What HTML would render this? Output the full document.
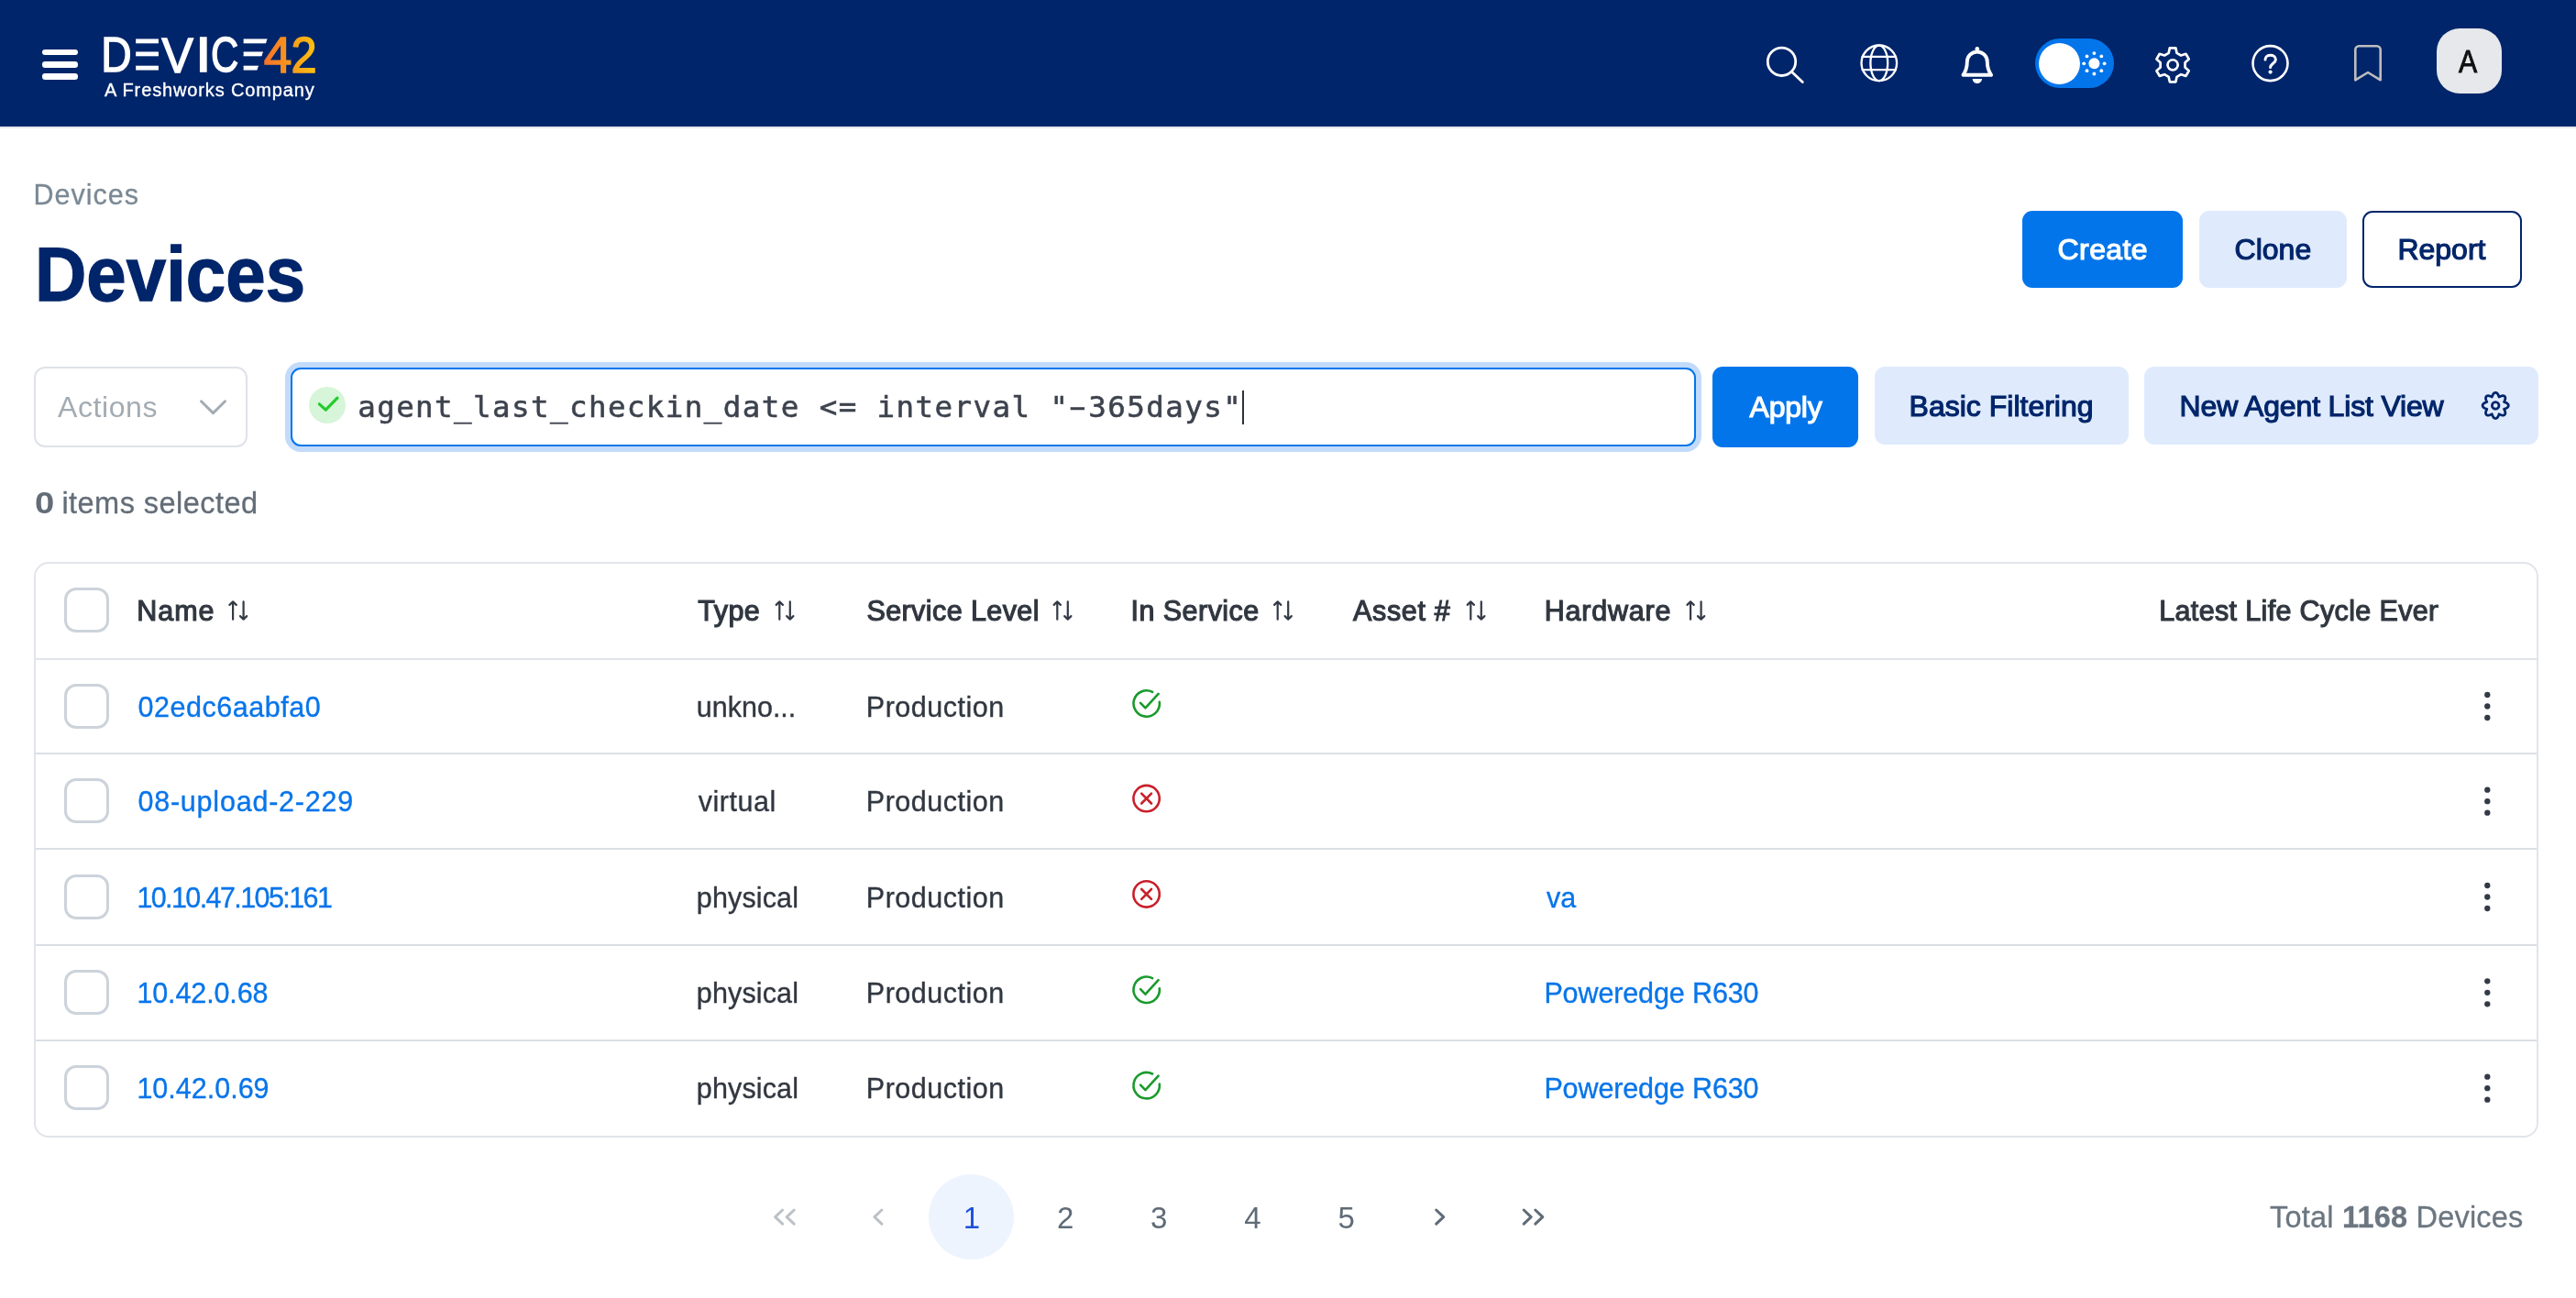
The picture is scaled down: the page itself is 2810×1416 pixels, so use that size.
<!DOCTYPE html>
<html lang="en"><head><meta charset="utf-8"><title>Devices</title>
<style>
html,body{margin:0;padding:0}
body{width:2810px;height:1416px;overflow:hidden;background:#fff;position:relative;font-family:"Liberation Sans",sans-serif}
.t{position:absolute;white-space:nowrap;line-height:1}
.t b{font-weight:700}
.a{position:absolute;box-sizing:border-box}
.cb{position:absolute;box-sizing:border-box;left:70.1px;width:49px;height:49px;border:3.75px solid #cdd3db;border-radius:13px;background:#fff}
.ln{position:absolute;left:39px;width:2728px;height:2.3px;background:#e1e4ea}
svg{position:absolute;left:0;top:0;overflow:visible}
svg text{font-family:"Liberation Sans",sans-serif}
#page{position:absolute;left:0;top:0;width:2810px;height:1416px;will-change:transform}

</style></head>
<body>
<div id="page">
<div class="a" style="left:0;top:0;width:2810px;height:138px;background:#00256a"></div>
<div class="a" style="left:0;top:138px;width:2810px;height:2px;background:#e3e6ee"></div>
<div class="a" style="left:46px;top:53.8px;width:39px;height:6.6px;border-radius:3.3px;background:#fff"></div>
<div class="a" style="left:46px;top:67.1px;width:39px;height:6.6px;border-radius:3.3px;background:#fff"></div>
<div class="a" style="left:46px;top:80.4px;width:39px;height:6.6px;border-radius:3.3px;background:#fff"></div>
<div class="a" style="left:2220px;top:42px;width:86px;height:54px;border-radius:27px;background:#0375eb"></div>
<div class="a" style="left:2224px;top:46.5px;width:45px;height:45px;border-radius:50%;background:#fff"></div>
<div class="a" style="left:2658px;top:31px;width:71px;height:71px;border-radius:25px;background:#e6e8ec"></div>
<div class="a" style="left:2206px;top:230px;width:175px;height:83.5px;border-radius:11px;background:#0375eb"></div>
<div class="a" style="left:2399px;top:230px;width:161px;height:83.5px;border-radius:11px;background:#dfebfd"></div>
<div class="a" style="left:2577px;top:230px;width:174px;height:83.5px;border-radius:11px;border:2.5px solid #00256a;background:#fff"></div>
<div class="a" style="left:37.4px;top:400px;width:233px;height:87.5px;border-radius:12px;border:2.2px solid #dfe2e8;background:#fff"></div>
<div class="a" style="left:317px;top:400.5px;width:1532.5px;height:86.5px;border-radius:11px;border:2.5px solid #0375eb;background:#fff;box-shadow:0 0 0 6px #c2dbfb"></div>
<div class="a" style="left:337.1px;top:421.9px;width:40px;height:40px;border-radius:50%;background:#d7f5d9"></div>
<div class="a" style="left:1354.9px;top:426px;width:2.1px;height:37px;background:#2b323b"></div>
<div class="a" style="left:1868px;top:400px;width:159px;height:88px;border-radius:11px;background:#0375eb"></div>
<div class="a" style="left:2045px;top:400px;width:276.7px;height:85px;border-radius:11px;background:#dfebfd"></div>
<div class="a" style="left:2339px;top:400px;width:430px;height:85px;border-radius:11px;background:#dfebfd"></div>
<div class="a" style="left:37px;top:613px;width:2732px;height:627.6px;border-radius:16px;border:2.2px solid #e1e4ea;border-bottom-width:2.8px;background:#fff"></div>
<div class="ln" style="top:717.9px"></div>
<div class="ln" style="top:820.9px;background:#dbdfe5"></div>
<div class="ln" style="top:925.2px;background:#dbdfe5"></div>
<div class="ln" style="top:1029.6px;background:#dbdfe5"></div>
<div class="ln" style="top:1133.9px;background:#dbdfe5"></div>
<div class="cb" style="top:641.1px"></div>
<div class="cb" style="top:745.5px"></div>
<div class="cb" style="top:849.2px"></div>
<div class="cb" style="top:953.5px"></div>
<div class="cb" style="top:1057.8px"></div>
<div class="cb" style="top:1162.2px"></div>
<div class="a" style="left:2340px;top:640px;width:320px;height:60px;overflow:hidden"><div class="t" id="llc" style="left:15.2px;top:11px;font:400 30.5px/1 'Liberation Sans',sans-serif;color:#313740;-webkit-text-stroke:1.15px #313740;letter-spacing:0.35px">Latest Life Cycle Event</div></div>
<div class="a" style="left:1013px;top:1281px;width:93.4px;height:93.4px;border-radius:50%;background:#eef4fe"></div>
<svg width="2810" height="1416" viewBox="0 0 2810 1416" fill="none" stroke-linecap="round" stroke-linejoin="round">
<defs><linearGradient id="og" x1="288" y1="0" x2="344" y2="0" gradientUnits="userSpaceOnUse"><stop offset="0" stop-color="#f3722a"/><stop offset="0.5" stop-color="#f8981d"/><stop offset="1" stop-color="#fdc010"/></linearGradient>
<clipPath id="e1"><rect x="148.2" y="30" width="24.7" height="60"/></clipPath>
<clipPath id="e2"><polygon points="265.7,30 295.6,30 277.6,85 265.7,85"/></clipPath></defs>
<g fill="#fff" stroke="#fff" stroke-width="1.5" stroke-linejoin="miter" font-size="54" font-weight="400">
<text x="110.15" y="77.95" textLength="33.4" lengthAdjust="spacingAndGlyphs">D</text>
<text x="135.0" y="76.4" textLength="44.1" lengthAdjust="spacingAndGlyphs" font-size="49" stroke-width="1.2" clip-path="url(#e1)">E</text>
<text x="176.5" y="78.6" textLength="34.3" lengthAdjust="spacingAndGlyphs">V</text>
<text x="213.1" y="77.95" textLength="17.6" lengthAdjust="spacingAndGlyphs">I</text>
<text x="230.1" y="77.95" textLength="30.3" lengthAdjust="spacingAndGlyphs">C</text>
<text x="252.5" y="76.4" textLength="44.1" lengthAdjust="spacingAndGlyphs" font-size="49" stroke-width="1.2" clip-path="url(#e2)">E</text>
</g>
<g fill="url(#og)" stroke="url(#og)" stroke-width="1.5" stroke-linejoin="miter" font-size="55.5" font-weight="400">
<text x="287.7" y="78.65" textLength="30.6" lengthAdjust="spacingAndGlyphs">4</text>
<text x="317.6" y="78.65" textLength="28.1" lengthAdjust="spacingAndGlyphs">2</text>
</g>
<g stroke="#fff" stroke-width="2.8"><circle cx="1943.5" cy="67.3" r="15.2"/><path d="M1954.6 78.4 L1966.3 89.6"/></g>
<g stroke="#fff" stroke-width="2.3"><circle cx="2049.8" cy="68.8" r="19.3"/><ellipse cx="2049.8" cy="68.8" rx="9.4" ry="19.3"/><path d="M2031.6 61.9H2068M2031.6 76.2H2068"/></g>
<path d="M2141.5 81.8 C2144.8 77 2145.8 73.5 2145.8 67.5 A11 11 0 0 1 2167.8 67.5 C2167.8 73.5 2168.8 77 2172.1000000000004 81.8 Z" stroke="#fff" stroke-width="3.9"/>
<circle cx="2156.8" cy="53.3" r="2.3" fill="#fff"/>
<path d="M2151.6000000000004 85.9 H2162.0 A5.2 5.2 0 0 1 2151.6000000000004 85.9 Z" fill="#fff"/>
<g fill="#fff" stroke="none"><circle cx="2284.4" cy="69.3" r="6"/>
<circle cx="2295.6" cy="69.3" r="1.9"/>
<circle cx="2292.3" cy="77.2" r="1.9"/>
<circle cx="2284.4" cy="80.5" r="1.9"/>
<circle cx="2276.5" cy="77.2" r="1.9"/>
<circle cx="2273.2" cy="69.3" r="1.9"/>
<circle cx="2276.5" cy="61.4" r="1.9"/>
<circle cx="2284.4" cy="58.1" r="1.9"/>
<circle cx="2292.3" cy="61.4" r="1.9"/>
</g>
<g stroke="#fff" stroke-width="2.7"><path d="M2374.56 57.90 L2373.36 52.38 L2366.84 52.38 L2365.64 57.90 L2361.11 60.51 L2355.74 58.80 L2352.48 64.44 L2356.65 68.24 L2356.65 73.46 L2352.48 77.26 L2355.74 82.90 L2361.11 81.19 L2365.64 83.80 L2366.84 89.32 L2373.36 89.32 L2374.56 83.80 L2379.09 81.19 L2384.46 82.90 L2387.72 77.26 L2383.55 73.46 L2383.55 68.24 L2387.72 64.44 L2384.46 58.80 L2379.09 60.51 Z"/><circle cx="2370.1" cy="70.85" r="5.6"/></g>
<g stroke="#fff" stroke-width="2.6"><circle cx="2476.5" cy="69.1" r="19"/><path d="M2471 65 C2471 58.6 2482.4 58.6 2482.4 65 C2482.4 69.2 2476.6 69.4 2476.6 73.6" stroke-width="3"/></g><circle cx="2476.6" cy="78.6" r="2.1" fill="#fff"/>
<path d="M2569.3 87.3 V54.3 a4 4 0 0 1 4 -4 H2592.7 a4 4 0 0 1 4 4 V87.3 L2583 79 Z" stroke="#bdbdbd" stroke-width="2.6"/>
<path d="M219.5 437.8 L232.5 450.6 L245.5 437.8" stroke="#a3abb3" stroke-width="3"/>
<path d="M348.4 440.8 L355.3 447.2 L368 434.2" stroke="#22cc2a" stroke-width="3.2"/>
<g stroke="#00256a" stroke-width="2.75"><path d="M2736.30 442.40 L2736.23 441.85 L2736.02 441.31 L2735.69 440.80 L2735.24 440.33 L2734.69 439.91 L2734.08 439.55 L2733.41 439.24 L2732.74 438.98 L2732.08 438.75 L2731.53 438.53 L2731.76 437.99 L2732.07 437.37 L2732.37 436.71 L2732.61 436.02 L2732.79 435.32 L2732.88 434.64 L2732.87 433.99 L2732.74 433.39 L2732.51 432.87 L2732.17 432.43 L2731.73 432.09 L2731.21 431.86 L2730.61 431.73 L2729.96 431.72 L2729.28 431.81 L2728.58 431.99 L2727.89 432.23 L2727.23 432.53 L2726.61 432.84 L2726.07 433.07 L2725.85 432.52 L2725.62 431.86 L2725.36 431.19 L2725.05 430.52 L2724.69 429.91 L2724.27 429.36 L2723.80 428.91 L2723.29 428.58 L2722.75 428.37 L2722.20 428.30 L2721.65 428.37 L2721.11 428.58 L2720.60 428.91 L2720.13 429.36 L2719.71 429.91 L2719.35 430.52 L2719.04 431.19 L2718.78 431.86 L2718.55 432.52 L2718.33 433.07 L2717.79 432.84 L2717.17 432.53 L2716.51 432.23 L2715.82 431.99 L2715.12 431.81 L2714.44 431.72 L2713.79 431.73 L2713.19 431.86 L2712.67 432.09 L2712.23 432.43 L2711.89 432.87 L2711.66 433.39 L2711.53 433.99 L2711.52 434.64 L2711.61 435.32 L2711.79 436.02 L2712.03 436.71 L2712.33 437.37 L2712.64 437.99 L2712.87 438.53 L2712.32 438.75 L2711.66 438.98 L2710.99 439.24 L2710.32 439.55 L2709.71 439.91 L2709.16 440.33 L2708.71 440.80 L2708.38 441.31 L2708.17 441.85 L2708.10 442.40 L2708.17 442.95 L2708.38 443.49 L2708.71 444.00 L2709.16 444.47 L2709.71 444.89 L2710.32 445.25 L2710.99 445.56 L2711.66 445.82 L2712.32 446.05 L2712.87 446.27 L2712.64 446.81 L2712.33 447.43 L2712.03 448.09 L2711.79 448.78 L2711.61 449.48 L2711.52 450.16 L2711.53 450.81 L2711.66 451.41 L2711.89 451.93 L2712.23 452.37 L2712.67 452.71 L2713.19 452.94 L2713.79 453.07 L2714.44 453.08 L2715.12 452.99 L2715.82 452.81 L2716.51 452.57 L2717.17 452.27 L2717.79 451.96 L2718.33 451.73 L2718.55 452.28 L2718.78 452.94 L2719.04 453.61 L2719.35 454.28 L2719.71 454.89 L2720.13 455.44 L2720.60 455.89 L2721.11 456.22 L2721.65 456.43 L2722.20 456.50 L2722.75 456.43 L2723.29 456.22 L2723.80 455.89 L2724.27 455.44 L2724.69 454.89 L2725.05 454.28 L2725.36 453.61 L2725.62 452.94 L2725.85 452.28 L2726.07 451.73 L2726.61 451.96 L2727.23 452.27 L2727.89 452.57 L2728.58 452.81 L2729.28 452.99 L2729.96 453.08 L2730.61 453.07 L2731.21 452.94 L2731.73 452.71 L2732.17 452.37 L2732.51 451.93 L2732.74 451.41 L2732.87 450.81 L2732.88 450.16 L2732.79 449.48 L2732.61 448.78 L2732.37 448.09 L2732.07 447.43 L2731.76 446.81 L2731.53 446.27 L2732.08 446.05 L2732.74 445.82 L2733.41 445.56 L2734.08 445.25 L2734.69 444.89 L2735.24 444.47 L2735.69 444.00 L2736.02 443.49 L2736.23 442.95 Z"/><circle cx="2722.2" cy="442.4" r="3.8"/></g>
<g stroke="#333a45" stroke-width="2.2"><path d="M254.1 675.7V656.3M250.5 659.9L254.1 656.3L257.7 659.9"/><path d="M265.6 656.3V675.7M262.0 672.1L265.6 675.7L269.2 672.1"/></g>
<g stroke="#333a45" stroke-width="2.2"><path d="M850.3 675.7V656.3M846.7 659.9L850.3 656.3L853.9 659.9"/><path d="M861.8 656.3V675.7M858.2 672.1L861.8 675.7L865.4 672.1"/></g>
<g stroke="#333a45" stroke-width="2.2"><path d="M1153.3 675.7V656.3M1149.7 659.9L1153.3 656.3L1156.9 659.9"/><path d="M1164.8 656.3V675.7M1161.2 672.1L1164.8 675.7L1168.4 672.1"/></g>
<g stroke="#333a45" stroke-width="2.2"><path d="M1393.7 675.7V656.3M1390.1 659.9L1393.7 656.3L1397.3 659.9"/><path d="M1405.2 656.3V675.7M1401.6 672.1L1405.2 675.7L1408.8 672.1"/></g>
<g stroke="#333a45" stroke-width="2.2"><path d="M1604.3 675.7V656.3M1600.7 659.9L1604.3 656.3L1607.9 659.9"/><path d="M1615.8 656.3V675.7M1612.2 672.1L1615.8 675.7L1619.4 672.1"/></g>
<g stroke="#333a45" stroke-width="2.2"><path d="M1844.1 675.7V656.3M1840.5 659.9L1844.1 656.3L1847.7 659.9"/><path d="M1855.6 656.3V675.7M1852.0 672.1L1855.6 675.7L1859.2 672.1"/></g>
<g stroke="#1a9a2c" stroke-width="2.6"><path d="M1264.8 765.9 A14.2 14.2 0 1 1 1257.1 754.8"/><path d="M1244.1 766.9 L1249.4 772.4 L1263.6 756.9"/></g>
<circle cx="2713.3" cy="758.0" r="3.15" fill="#333a45"/>
<circle cx="2713.3" cy="770.5" r="3.15" fill="#333a45"/>
<circle cx="2713.3" cy="783.0" r="3.15" fill="#333a45"/>
<g stroke="#c8202b" stroke-width="2.6"><circle cx="1250.6" cy="871.1" r="14.2"/><path d="M1245.1999999999998 865.7L1256.0 876.5M1256.0 865.7L1245.1999999999998 876.5"/></g>
<circle cx="2713.3" cy="861.7" r="3.15" fill="#333a45"/>
<circle cx="2713.3" cy="874.2" r="3.15" fill="#333a45"/>
<circle cx="2713.3" cy="886.7" r="3.15" fill="#333a45"/>
<g stroke="#c8202b" stroke-width="2.6"><circle cx="1250.6" cy="975.4" r="14.2"/><path d="M1245.1999999999998 970.0L1256.0 980.8M1256.0 970.0L1245.1999999999998 980.8"/></g>
<circle cx="2713.3" cy="966.0" r="3.15" fill="#333a45"/>
<circle cx="2713.3" cy="978.5" r="3.15" fill="#333a45"/>
<circle cx="2713.3" cy="991.0" r="3.15" fill="#333a45"/>
<g stroke="#1a9a2c" stroke-width="2.6"><path d="M1264.8 1078.2 A14.2 14.2 0 1 1 1257.1 1067.1"/><path d="M1244.1 1079.2 L1249.4 1084.7 L1263.6 1069.2"/></g>
<circle cx="2713.3" cy="1070.3" r="3.15" fill="#333a45"/>
<circle cx="2713.3" cy="1082.8" r="3.15" fill="#333a45"/>
<circle cx="2713.3" cy="1095.3" r="3.15" fill="#333a45"/>
<g stroke="#1a9a2c" stroke-width="2.6"><path d="M1264.8 1182.6 A14.2 14.2 0 1 1 1257.1 1171.5"/><path d="M1244.1 1183.6 L1249.4 1189.1 L1263.6 1173.6"/></g>
<circle cx="2713.3" cy="1174.7" r="3.15" fill="#333a45"/>
<circle cx="2713.3" cy="1187.2" r="3.15" fill="#333a45"/>
<circle cx="2713.3" cy="1199.7" r="3.15" fill="#333a45"/>
<path d="M853.6 1320.0 L845.6 1327.6 L853.6 1335.1999999999998" stroke="#bcc1c7" stroke-width="3"/>
<path d="M866.2 1320.0 L858.2 1327.6 L866.2 1335.1999999999998" stroke="#bcc1c7" stroke-width="3"/>
<path d="M961.9 1320.0 L953.9 1327.6 L961.9 1335.1999999999998" stroke="#bcc1c7" stroke-width="3"/>
<path d="M1566.7 1320.0 L1574.7 1327.6 L1566.7 1335.1999999999998" stroke="#5f6b77" stroke-width="3"/>
<path d="M1662.2 1320.0 L1670.2 1327.6 L1662.2 1335.1999999999998" stroke="#5f6b77" stroke-width="3"/>
<path d="M1674.8 1320.0 L1682.8 1327.6 L1674.8 1335.1999999999998" stroke="#5f6b77" stroke-width="3"/>
</svg>
<div class="t" id="fw" style="left:114.00px;top:88.01px;font:400 20px/1 'Liberation Sans', sans-serif;color:#fff;letter-spacing:0.868px;-webkit-text-stroke:0.35px #fff;">A Freshworks Company</div>
<div class="t" id="av" style="left:2682.00px;top:50.01px;font:400 34.6px/1 'Liberation Sans', sans-serif;color:#111;transform:scaleX(0.8758);transform-origin:0 0;-webkit-text-stroke:0.9px #111;">A</div>
<div class="t" id="bc" style="left:36.60px;top:197.01px;font:400 30.5px/1 'Liberation Sans', sans-serif;color:#7a8995;letter-spacing:1.000px;-webkit-text-stroke:0.3px #7a8995;">Devices</div>
<div class="t" id="h1" style="left:38.00px;top:256.52px;font:700 84px/1 'Liberation Sans', sans-serif;color:#00256a;transform:scaleX(0.9291);transform-origin:0 0;-webkit-text-stroke:1.3px #00256a;">Devices</div>
<div class="t" id="b1" style="left:2244.60px;top:256.01px;font:400 32px/1 'Liberation Sans', sans-serif;color:#fff;letter-spacing:0.400px;-webkit-text-stroke:1.15px #fff;">Create</div>
<div class="t" id="b2" style="left:2437.60px;top:256.01px;font:400 32px/1 'Liberation Sans', sans-serif;color:#00256a;letter-spacing:0.000px;-webkit-text-stroke:1.15px #00256a;">Clone</div>
<div class="t" id="b3" style="left:2615.40px;top:256.01px;font:400 32px/1 'Liberation Sans', sans-serif;color:#00256a;-webkit-text-stroke:1.15px #00256a;">Report</div>
<div class="t" id="act" style="left:63.00px;top:428.41px;font:400 32px/1 'Liberation Sans', sans-serif;color:#a3abb3;letter-spacing:0.583px;">Actions</div>
<div class="t" id="q" style="left:390.20px;top:428.11px;font:400 32.5px/1 'DejaVu Sans Mono', 'Liberation Mono', monospace;color:#3d434e;letter-spacing:1.411px;-webkit-text-stroke:0.55px #3d434e;">agent_last_checkin_date &lt;= interval "<span style="display:inline-block;transform:scaleX(1.75)">-</span>365days"</div>
<div class="t" id="ap" style="left:1908.60px;top:428.31px;font:400 32px/1 'Liberation Sans', sans-serif;color:#fff;letter-spacing:-0.250px;-webkit-text-stroke:1.15px #fff;">Apply</div>
<div class="t" id="bf" style="left:2082.60px;top:426.61px;font:400 32px/1 'Liberation Sans', sans-serif;color:#00256a;letter-spacing:0.000px;-webkit-text-stroke:1.15px #00256a;">Basic Filtering</div>
<div class="t" id="nv" style="left:2377.60px;top:426.61px;font:400 32px/1 'Liberation Sans', sans-serif;color:#00256a;letter-spacing:-0.167px;-webkit-text-stroke:1.15px #00256a;">New Agent List View</div>
<div class="t" id="sel0" style="left:37.60px;top:531.50px;font:700 33px/1 'Liberation Sans', sans-serif;color:#636d78;transform:scaleX(1.1566);transform-origin:0 0;">0</div>
<div class="t" id="sel1" style="left:67.40px;top:532.50px;font:400 32.5px/1 'Liberation Sans', sans-serif;color:#636d78;letter-spacing:0.462px;-webkit-text-stroke:0.3px #636d78;">items selected</div>
<div class="t" id="th0" style="left:149.20px;top:650.81px;font:400 30.5px/1 'Liberation Sans', sans-serif;color:#313740;letter-spacing:1.000px;-webkit-text-stroke:1.15px #313740;">Name</div>
<div class="t" id="th1" style="left:761.20px;top:650.81px;font:400 30.5px/1 'Liberation Sans', sans-serif;color:#313740;letter-spacing:0.500px;-webkit-text-stroke:1.15px #313740;">Type</div>
<div class="t" id="th2" style="left:945.40px;top:650.81px;font:400 30.5px/1 'Liberation Sans', sans-serif;color:#313740;letter-spacing:0.417px;-webkit-text-stroke:1.15px #313740;">Service Level</div>
<div class="t" id="th3" style="left:1233.60px;top:650.81px;font:400 30.5px/1 'Liberation Sans', sans-serif;color:#313740;letter-spacing:0.444px;-webkit-text-stroke:1.15px #313740;">In Service</div>
<div class="t" id="th4" style="left:1476.00px;top:650.81px;font:400 30.5px/1 'Liberation Sans', sans-serif;color:#313740;letter-spacing:0.667px;-webkit-text-stroke:1.15px #313740;">Asset #</div>
<div class="t" id="th5" style="left:1684.80px;top:650.81px;font:400 30.5px/1 'Liberation Sans', sans-serif;color:#313740;letter-spacing:0.786px;-webkit-text-stroke:1.15px #313740;">Hardware</div>
<div class="t" id="n0" style="left:150.40px;top:755.61px;font:400 30.5px/1 'Liberation Sans', sans-serif;color:#0875ea;letter-spacing:0.545px;-webkit-text-stroke:0.35px #0875ea;">02edc6aabfa0</div>
<div class="t" id="ty0" style="left:759.80px;top:755.61px;font:400 30.5px/1 'Liberation Sans', sans-serif;color:#313740;letter-spacing:-0.000px;-webkit-text-stroke:0.35px #313740;">unkno...</div>
<div class="t" id="sl0" style="left:944.80px;top:755.61px;font:400 30.5px/1 'Liberation Sans', sans-serif;color:#313740;letter-spacing:0.500px;-webkit-text-stroke:0.35px #313740;">Production</div>
<div class="t" id="n1" style="left:150.40px;top:859.31px;font:400 30.5px/1 'Liberation Sans', sans-serif;color:#0875ea;letter-spacing:0.786px;-webkit-text-stroke:0.35px #0875ea;">08-upload-2-229</div>
<div class="t" id="ty1" style="left:761.80px;top:859.31px;font:400 30.5px/1 'Liberation Sans', sans-serif;color:#313740;letter-spacing:0.500px;-webkit-text-stroke:0.35px #313740;">virtual</div>
<div class="t" id="sl1" style="left:944.80px;top:859.31px;font:400 30.5px/1 'Liberation Sans', sans-serif;color:#313740;letter-spacing:0.500px;-webkit-text-stroke:0.35px #313740;">Production</div>
<div class="t" id="n2" style="left:149.40px;top:963.61px;font:400 30.5px/1 'Liberation Sans', sans-serif;color:#0875ea;letter-spacing:-1.600px;-webkit-text-stroke:0.35px #0875ea;">10.10.47.105:161</div>
<div class="t" id="ty2" style="left:759.80px;top:963.61px;font:400 30.5px/1 'Liberation Sans', sans-serif;color:#313740;letter-spacing:0.143px;-webkit-text-stroke:0.35px #313740;">physical</div>
<div class="t" id="sl2" style="left:944.80px;top:963.61px;font:400 30.5px/1 'Liberation Sans', sans-serif;color:#313740;letter-spacing:0.500px;-webkit-text-stroke:0.35px #313740;">Production</div>
<div class="t" id="hw2" style="left:1686.90px;top:963.61px;font:400 30.5px/1 'Liberation Sans', sans-serif;color:#0875ea;-webkit-text-stroke:0.35px #0875ea;">va</div>
<div class="t" id="n3" style="left:149.40px;top:1067.91px;font:400 30.5px/1 'Liberation Sans', sans-serif;color:#0875ea;letter-spacing:-0.111px;-webkit-text-stroke:0.35px #0875ea;">10.42.0.68</div>
<div class="t" id="ty3" style="left:759.80px;top:1067.91px;font:400 30.5px/1 'Liberation Sans', sans-serif;color:#313740;letter-spacing:0.143px;-webkit-text-stroke:0.35px #313740;">physical</div>
<div class="t" id="sl3" style="left:944.80px;top:1067.91px;font:400 30.5px/1 'Liberation Sans', sans-serif;color:#313740;letter-spacing:0.500px;-webkit-text-stroke:0.35px #313740;">Production</div>
<div class="t" id="hw3" style="left:1684.40px;top:1067.91px;font:400 30.5px/1 'Liberation Sans', sans-serif;color:#0875ea;letter-spacing:-0.115px;-webkit-text-stroke:0.35px #0875ea;">Poweredge R630</div>
<div class="t" id="n4" style="left:149.40px;top:1172.31px;font:400 30.5px/1 'Liberation Sans', sans-serif;color:#0875ea;letter-spacing:-0.000px;-webkit-text-stroke:0.35px #0875ea;">10.42.0.69</div>
<div class="t" id="ty4" style="left:759.80px;top:1172.31px;font:400 30.5px/1 'Liberation Sans', sans-serif;color:#313740;letter-spacing:0.143px;-webkit-text-stroke:0.35px #313740;">physical</div>
<div class="t" id="sl4" style="left:944.80px;top:1172.31px;font:400 30.5px/1 'Liberation Sans', sans-serif;color:#313740;letter-spacing:0.500px;-webkit-text-stroke:0.35px #313740;">Production</div>
<div class="t" id="hw4" style="left:1684.40px;top:1172.31px;font:400 30.5px/1 'Liberation Sans', sans-serif;color:#0875ea;letter-spacing:-0.115px;-webkit-text-stroke:0.35px #0875ea;">Poweredge R630</div>
<div class="t" id="p0" style="left:1050.70px;top:1311.50px;font:400 33px/1 'Liberation Sans', sans-serif;color:#1d4fd8;width:18px;text-align:center;">1</div>
<div class="t" id="p1" style="left:1152.90px;top:1311.50px;font:400 33px/1 'Liberation Sans', sans-serif;color:#5f6b77;width:18px;text-align:center;">2</div>
<div class="t" id="p2" style="left:1255.10px;top:1311.50px;font:400 33px/1 'Liberation Sans', sans-serif;color:#5f6b77;width:18px;text-align:center;">3</div>
<div class="t" id="p3" style="left:1357.30px;top:1311.50px;font:400 33px/1 'Liberation Sans', sans-serif;color:#5f6b77;width:18px;text-align:center;">4</div>
<div class="t" id="p4" style="left:1459.50px;top:1311.50px;font:400 33px/1 'Liberation Sans', sans-serif;color:#5f6b77;width:18px;text-align:center;">5</div>
<div class="t" id="tot" style="left:2476.00px;top:1311.80px;font:400 32.5px/1 'Liberation Sans', sans-serif;color:#6b7680;letter-spacing:0.206px;-webkit-text-stroke:0.3px #6b7680;">Total <b>1168</b> Devices</div>
</div>
</body></html>
